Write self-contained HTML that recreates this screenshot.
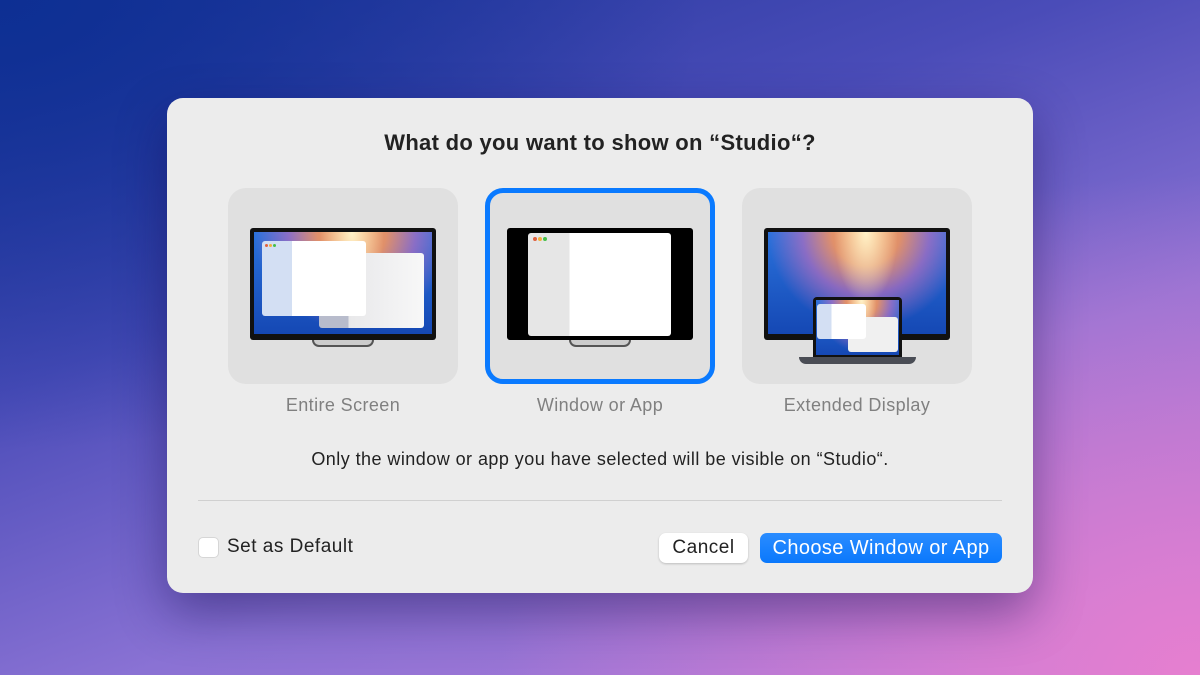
<!DOCTYPE html>
<html><head><style>
*{margin:0;padding:0;box-sizing:border-box}
body{width:1200px;height:675px;overflow:hidden;position:relative;font-family:"Liberation Sans",sans-serif;
background:
radial-gradient(ellipse 700px 500px at 1200px 675px,#e67fd0 0%,rgba(230,127,208,0) 100%),
radial-gradient(ellipse 700px 450px at 0px 0px,#0d2f93 0%,rgba(13,47,147,0) 100%),
linear-gradient(160deg,#1e3599 0%,#4a4cb8 35%,#8a72d4 65%,#b67ad8 100%);}
.abs{position:absolute}
.dlg{left:167px;top:98px;width:866px;height:495px;background:#ececec;border-radius:16px;box-shadow:0 20px 50px rgba(20,10,80,.45)}
.t{position:absolute;left:0;width:1200px;text-align:center}
.card{position:absolute;top:188px;width:230px;height:196px;background:#e0e0e0;border-radius:18px}
.sel{border:5px solid #0a7aff}
.lbl{position:absolute;top:395px;width:230px;text-align:center;font-size:18px;letter-spacing:.4px;color:#808080}
.mon{position:absolute;background:#111;border-radius:3px}
.scr{position:absolute;left:4px;top:4px;right:4px;bottom:6px;overflow:hidden;
background:radial-gradient(ellipse 18% 70% at 55% 0%,#fff2c8 0%,rgba(255,220,160,0) 100%),radial-gradient(ellipse 55% 95% at 55% 0%,#f4a060 0%,#e0906a 35%,rgba(180,110,190,.7) 65%,rgba(30,90,200,0) 100%),linear-gradient(180deg,#2a72dc,#1548b4)}
.stand{position:absolute;height:7px;border:2px solid #555;border-top:none;border-radius:0 0 40px 40px;background:#ccc}
.win{position:absolute;background:#fff;border-radius:3px;overflow:hidden}
</style></head><body>
<div class="abs dlg"></div>
<div class="t" style="top:130px;font-size:22px;font-weight:bold;color:#222;letter-spacing:.3px">What do you want to show on “Studio“?</div>

<div class="card" style="left:228px"></div>
<div class="mon" style="left:250px;top:228px;width:186px;height:112px"><div class="scr"></div></div>
<div class="win" style="left:319px;top:253px;width:105px;height:75px;background:linear-gradient(90deg,#b8bccc 0 28%,#e8e8ea 28%,#f8f8f8)"></div>
<div class="win" style="left:262px;top:241px;width:104px;height:75px;background:linear-gradient(90deg,#d3dff3 0 29%,#fff 29%)"></div>
<div class="abs" style="left:265px;top:244px;width:3px;height:3px;border-radius:2px;background:#e0613f;box-shadow:4px 0 #f2b03c,8px 0 #45c04a"></div>
<div class="stand" style="left:312px;top:340px;width:62px"></div>

<div class="card sel" style="left:485px"></div>
<div class="mon" style="left:507px;top:228px;width:186px;height:112px;background:#000"></div>
<div class="win" style="left:528px;top:233px;width:143px;height:103px;background:linear-gradient(90deg,#e6e6e6 0 29%,#fff 29%)"></div>
<div class="abs" style="left:533px;top:237px;width:4px;height:4px;border-radius:2px;background:#e0613f;box-shadow:5px 0 #f2b03c,10px 0 #45c04a"></div>
<div class="stand" style="left:569px;top:340px;width:62px"></div>

<div class="card" style="left:742px"></div>
<div class="mon" style="left:764px;top:228px;width:186px;height:112px"><div class="scr"></div></div>
<div class="mon" style="left:813px;top:297px;width:89px;height:61px;border-radius:4px 4px 0 0">
<div class="scr" style="left:3px;top:3px;right:3px;bottom:3px"></div></div>
<div class="win" style="left:848px;top:317px;width:50px;height:35px;background:#f0f0f0"></div>
<div class="win" style="left:817px;top:304px;width:49px;height:35px;background:linear-gradient(90deg,#d3dff3 0 30%,#fff 30%)"></div>
<div class="abs" style="left:799px;top:357px;width:117px;height:7px;background:#4a4d55;border-radius:0 0 8px 8px"></div>

<div class="lbl" style="left:228px">Entire Screen</div>
<div class="lbl" style="left:485px">Window or App</div>
<div class="lbl" style="left:742px">Extended Display</div>

<div class="t" style="top:449px;font-size:18px;letter-spacing:.45px;color:#222">Only the window or app you have selected will be visible on “Studio“.</div>
<div class="abs" style="left:198px;top:500px;width:804px;height:1px;background:#d0d0d0"></div>

<div class="abs" style="left:198px;top:537px;width:21px;height:21px;background:#fff;border-radius:5px;border:1px solid #d6d6d6"></div>
<div class="abs" style="left:227px;top:536px;font-size:19px;letter-spacing:.5px;color:#222">Set as Default</div>
<div class="abs" style="left:659px;top:533px;width:89px;height:30px;background:#fff;border-radius:7px;box-shadow:0 1px 2px rgba(0,0,0,.2);font-size:19px;letter-spacing:.5px;color:#222;text-align:center;line-height:30px">Cancel</div>
<div class="abs" style="left:760px;top:533px;width:242px;height:30px;background:linear-gradient(#2a8cff,#0a78fc);border-radius:7px;font-size:20px;letter-spacing:.4px;color:#fff;text-align:center;line-height:30px">Choose Window or App</div>
</body></html>
